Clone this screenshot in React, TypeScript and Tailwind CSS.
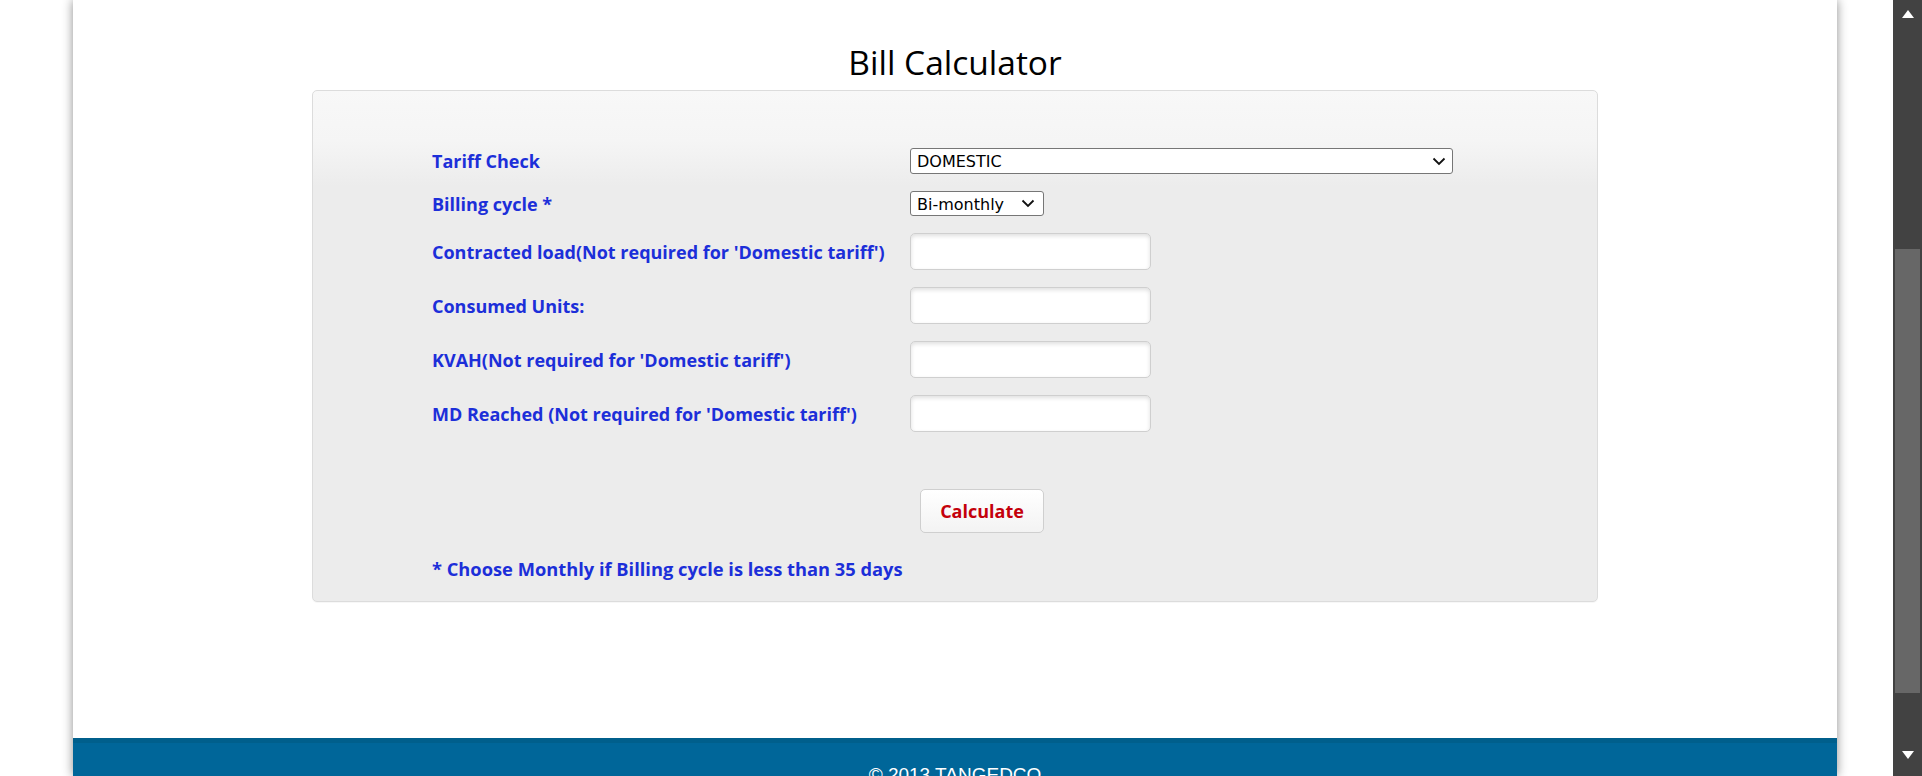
import React from 'react';

const FONT = "font-['Open_Sans','Liberation_Sans',sans-serif]";

type Row = { label: string; control: 'tariff' | 'cycle' | 'input' };

const ROWS: Row[] = [
  { label: 'Tariff Check', control: 'tariff' },
  { label: 'Billing cycle *', control: 'cycle' },
  { label: "Contracted load(Not required for 'Domestic tariff')", control: 'input' },
  { label: 'Consumed Units:', control: 'input' },
  { label: "KVAH(Not required for 'Domestic tariff')", control: 'input' },
  { label: "MD Reached (Not required for 'Domestic tariff')", control: 'input' },
];

function Chevron() {
  return (
    <svg width="14" height="9" viewBox="0 0 14 9" fill="none" className="shrink-0">
      <path d="M1.5 1.5l5.5 5.5 5.5-5.5" stroke="#111" strokeWidth="1.8" />
    </svg>
  );
}

function FakeSelect({ value, wide }: { value: string; wide?: boolean }) {
  return (
    <div
      className={`flex items-center justify-between rounded-[3px] border border-[#767676] bg-white pl-[6px] font-['DejaVu_Sans',sans-serif] text-[16px] leading-none text-black ${
        wide ? 'h-[26px] w-[543px] pr-[6px]' : 'h-[25px] w-[134px] pr-[8px]'
      }`}
    >
      <span className="pt-[2px]">{value}</span>
      <Chevron />
    </div>
  );
}

function Field() {
  return (
    <input
      type="text"
      className="h-[37px] w-[241px] rounded-[5px] border border-[#cfcfcf] bg-white px-2 shadow-[inset_0_2px_4px_rgba(0,0,0,0.13)] outline-none"
    />
  );
}

function Scrollbar() {
  return (
    <div className="flex h-full w-[29px] shrink-0 flex-col items-center bg-[#424242]">
      <div className="mt-[10px] h-0 w-0 border-x-[6px] border-b-[8px] border-x-transparent border-b-white" />
      <div className="mt-[231px] h-[444px] w-[25px] bg-[#676767]" />
      <div className="mt-[58px] h-0 w-0 border-x-[6px] border-t-[8px] border-x-transparent border-t-white" />
    </div>
  );
}

export default function App() {
  return (
    <div className={`flex h-[776px] w-full overflow-hidden bg-white ${FONT}`}>
      <div className="flex-1">
        <div className="ml-[73px] flex h-full w-[1764px] flex-col bg-white shadow-[0_0_10px_rgba(0,0,0,0.45)]">
          <h1 className="pt-[40px] text-center text-[33.5px] font-normal leading-[44px] text-black">Bill Calculator</h1>
          <div className="mx-auto mt-[6px] h-[512px] w-[1286px] rounded-[5px] border border-[#dcdcdc] bg-[linear-gradient(to_bottom,#f8f8f8_0px,#f5f5f5_50px,#ececec_95px,#ececec_100%)] pl-[119px] pt-[57px] shadow-[0_1px_0_#f7f7f7]">
            <div className="flex flex-col gap-[17px]">
              {ROWS.map((r) => (
                <div
                  key={r.label}
                  className={`flex items-center ${
                    r.control === 'tariff' ? 'h-[26px]' : r.control === 'cycle' ? 'h-[25px]' : 'h-[37px]'
                  }`}
                >
                  <div className="w-[478px] text-[18px] font-bold leading-[22px] text-[#1c2fd9]">{r.label}</div>
                  {r.control === 'tariff' && <FakeSelect value="DOMESTIC" wide />}
                  {r.control === 'cycle' && <FakeSelect value="Bi-monthly" />}
                  {r.control === 'input' && <Field />}
                </div>
              ))}
            </div>
            <button
              type="button"
              className="ml-[488px] mt-[57px] h-[44px] w-[124px] rounded-[5px] border border-[#cfcfcf] bg-[linear-gradient(to_bottom,#ffffff,#f3f3f3)] text-[18px] font-bold leading-none text-[#c4000b]"
            >
              Calculate
            </button>
            <p className="mt-[24px] text-[18.3px] font-bold leading-[24px] text-[#1c2fd9]">
              * Choose Monthly if Billing cycle is less than 35 days
            </p>
          </div>
          <div className="flex-1" />
          <footer className="h-[38px] shrink-0 border-t-[5px] border-[#005f8c] bg-[#006699] pt-[21px] text-center font-['Liberation_Sans',sans-serif] text-[19px] leading-[22px] text-white">
            © 2013 TANGEDCO
          </footer>
        </div>
      </div>
      <Scrollbar />
    </div>
  );
}
